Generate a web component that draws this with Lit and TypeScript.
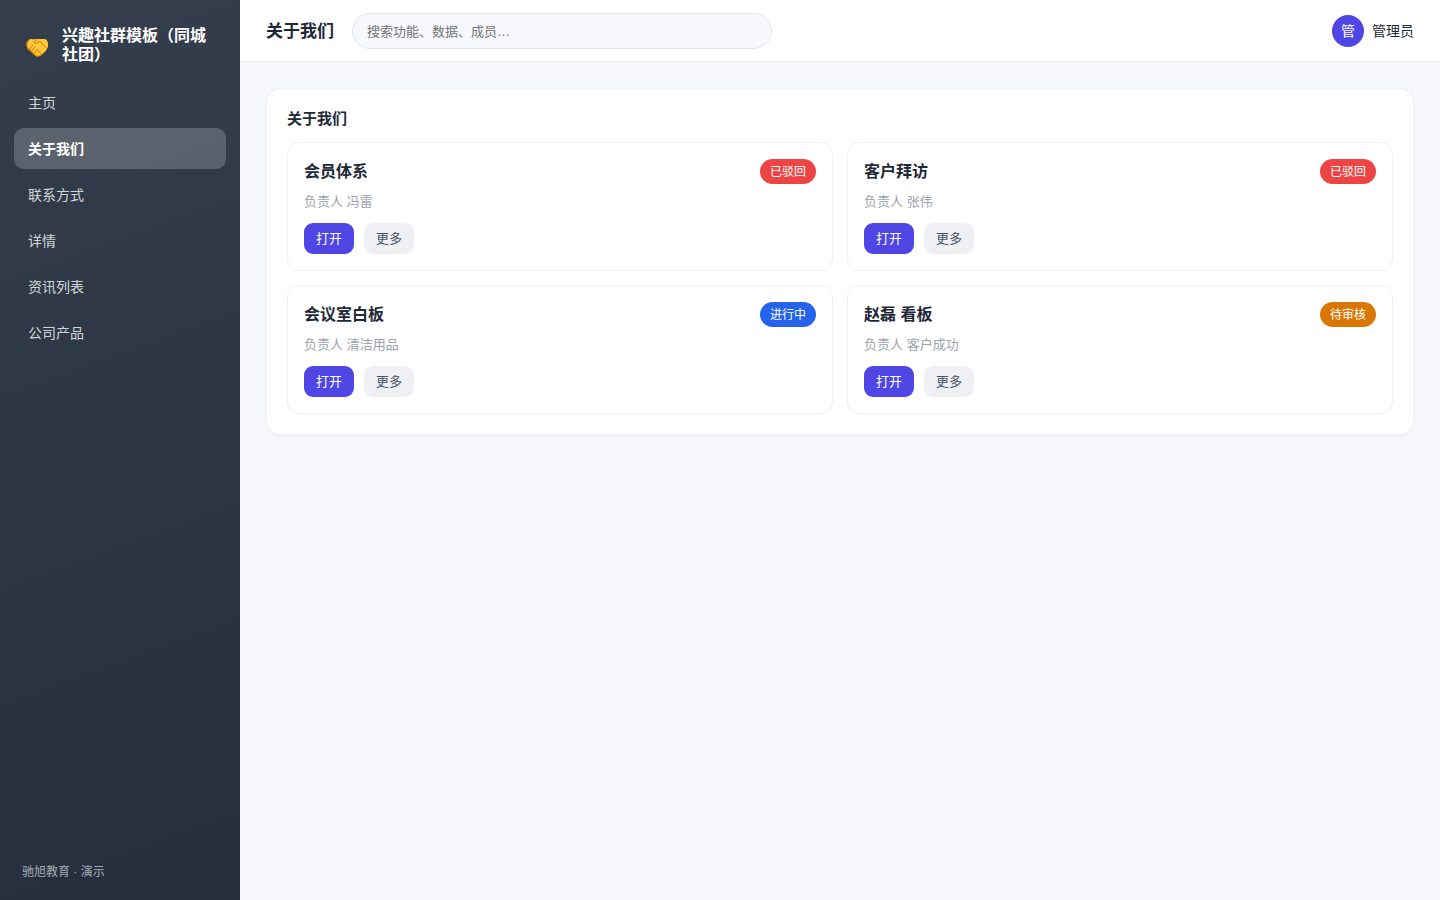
import { LitElement, html, css, svg } from "lit";
import { customElement, property, state } from "lit/decorators.js";

type Tone = "danger" | "info" | "warning";

interface Item {
  title: string;
  owner: string;
  status: string;
  tone: Tone;
}

const NAV = ["主页", "关于我们", "联系方式", "详情", "资讯列表", "公司产品"];

const ITEMS: Item[] = [
  { title: "会员体系", owner: "冯雷", status: "已驳回", tone: "danger" },
  { title: "客户拜访", owner: "张伟", status: "已驳回", tone: "danger" },
  { title: "会议室白板", owner: "清洁用品", status: "进行中", tone: "info" },
  { title: "赵磊 看板", owner: "客户成功", status: "待审核", tone: "warning" },
];

const handshake = svg`
  <path fill="#d98200" d="M3 3.500 1 5.500 0 8l1.200 5 3.300 2.500 4.500 4.500 2.500 1 3-1 5-4.500L22 10.500V7l-1.500-3.300L18 3H4.500z"/>
  <path fill="#ffc63a" d="M3.500 3.500 5 3h13l2.500.8L22 7v3.500l-2 4-4 3.500-3.500 1.700-2.500-.7-5-5L1.700 11 1.500 7.500z"/>
  <path fill="none" stroke="#d87c00" stroke-width="1" stroke-linecap="round" stroke-linejoin="round" d="M10.300 3.800 8 6.500l2.300.8 3.500-2 6.700 6.500M6.500 9.500 4 12.500M9 11l-3.200 3.800M11.300 13.500l-2.800 3.700M12 14l2.500 3.500M7 3.800l1.500-.3"/>
`;

@customElement("item-card")
export class ItemCard extends LitElement {
  @property({ attribute: false }) item!: Item;

  static styles = css`
    :host {
      display: block;
      min-width: 0;
    }
    .card {
      box-sizing: border-box;
      padding: 16px;
      border: 1px solid #eef0f3;
      border-radius: 12px;
      background: #fff;
    }
    .head {
      display: flex;
      align-items: center;
      justify-content: space-between;
      gap: 12px;
    }
    .title {
      margin: 0;
      font-size: 16px;
      line-height: 25px;
      font-weight: 700;
      color: #1f2937;
    }
    .badge {
      flex: none;
      padding: 5px 10px 3px;
      border-radius: 999px;
      font-size: 12px;
      line-height: 17px;
      color: #fff;
    }
    .danger {
      background: #ef4444;
    }
    .info {
      background: #2563eb;
    }
    .warning {
      background: #d97706;
    }
    .owner {
      margin: 8px 0 12px;
      font-size: 13px;
      line-height: 19px;
      color: #9ca3af;
    }
    .actions {
      display: flex;
      gap: 10px;
    }
    .btn {
      padding: 6px 12px;
      border: 0;
      border-radius: 9px;
      font: inherit;
      font-size: 13px;
      line-height: 19px;
      cursor: pointer;
      background: #eef0f4;
      color: #475569;
    }
    .primary {
      background: #4f46e5;
      color: #fff;
    }
  `;

  render() {
    const { title, owner, status, tone } = this.item;
    return html`
      <article class="card">
        <div class="head">
          <h3 class="title">${title}</h3>
          <span class="badge ${tone}">${status}</span>
        </div>
        <p class="owner">负责人 ${owner}</p>
        <div class="actions">
          <button class="btn primary" type="button">打开</button>
          <button class="btn" type="button">更多</button>
        </div>
      </article>
    `;
  }
}

@customElement("app-root")
export class AppRoot extends LitElement {
  @state() private active = 1;

  static styles = css`
    :host {
      display: grid;
      grid-template-columns: 240px minmax(0, 1fr);
      min-height: 100vh;
      background: #f5f7fb;
      color: #1f2937;
      font-family: "Liberation Sans", "Noto Sans CJK SC", sans-serif;
      font-size: 14px;
      line-height: 20px;
    }
    .sidebar {
      box-sizing: border-box;
      display: flex;
      flex-direction: column;
      padding: 26px 14px 18px;
      background: linear-gradient(160deg, #343e4d, #252e3d);
      color: #fff;
    }
    .brand {
      display: flex;
      align-items: center;
      gap: 12px;
      padding: 0 12px 18px;
      font-size: 16px;
      line-height: 19px;
      font-weight: 700;
    }
    .logo {
      flex: none;
      width: 24px;
      height: 24px;
      padding-top: 6px;
    }
    .nav {
      display: flex;
      flex-direction: column;
      gap: 5px;
    }
    .link {
      padding: 11px 14px 9px;
      border-radius: 10px;
      line-height: 21px;
      color: rgba(255, 255, 255, 0.8);
      text-decoration: none;
    }
    .link.active {
      background: rgba(255, 255, 255, 0.2);
      color: #fff;
      font-weight: 700;
    }
    .foot {
      margin-top: auto;
      padding: 0 8px;
      font-size: 12px;
      color: rgba(255, 255, 255, 0.6);
    }
    .topbar {
      display: flex;
      align-items: center;
      gap: 18px;
      padding: 13px 26px 12px;
      border-bottom: 1px solid #eceef2;
      background: #fff;
    }
    .page-title {
      flex: none;
      margin: 0;
      font-size: 17px;
      line-height: 27px;
      font-weight: 700;
    }
    .search {
      box-sizing: border-box;
      flex: 0 1 420px;
      min-width: 0;
      height: 36px;
      padding: 0 14px;
      border: 1px solid #e2e5ec;
      border-radius: 999px;
      background: #f6f8fc;
      color: #1f2937;
      font: inherit;
      font-size: 13px;
    }
    .search::placeholder {
      color: #757575;
    }
    .user {
      display: flex;
      align-items: center;
      gap: 8px;
      margin-left: auto;
    }
    .avatar {
      display: grid;
      place-items: center;
      width: 32px;
      height: 32px;
      border-radius: 50%;
      background: #4f46e5;
      color: #fff;
    }
    .main {
      padding: 26px;
    }
    .panel {
      padding: 20px;
      border: 1px solid #eff1f5;
      border-radius: 14px;
      background: #fff;
      box-shadow: 0 1px 3px rgba(15, 23, 42, 0.04);
    }
    .panel-title {
      margin: 0 0 14px;
      font-size: 15px;
      line-height: 19px;
      font-weight: 700;
    }
    .cards {
      display: grid;
      grid-template-columns: repeat(2, minmax(0, 1fr));
      gap: 14px;
    }
  `;

  private select(e: Event, i: number) {
    e.preventDefault();
    this.active = i;
  }

  render() {
    return html`
      <aside class="sidebar">
        <div class="brand">
          <svg class="logo" viewBox="0 0 24 24" aria-hidden="true">${handshake}</svg>
          <span>兴趣社群模板（同城社团）</span>
        </div>
        <nav class="nav">
          ${NAV.map(
            (label, i) => html`<a
              class="link ${i === this.active ? "active" : ""}"
              href="#"
              @click=${(e: Event) => this.select(e, i)}
              >${label}</a
            >`
          )}
        </nav>
        <div class="foot">驰旭教育 · 演示</div>
      </aside>
      <div class="content">
        <header class="topbar">
          <h1 class="page-title">关于我们</h1>
          <input class="search" type="search" aria-label="搜索" placeholder="搜索功能、数据、成员…" />
          <div class="user">
            <span class="avatar">管</span>
            <span>管理员</span>
          </div>
        </header>
        <main class="main">
          <section class="panel">
            <h2 class="panel-title">关于我们</h2>
            <div class="cards">
              ${ITEMS.map((item) => html`<item-card .item=${item}></item-card>`)}
            </div>
          </section>
        </main>
      </div>
    `;
  }
}
